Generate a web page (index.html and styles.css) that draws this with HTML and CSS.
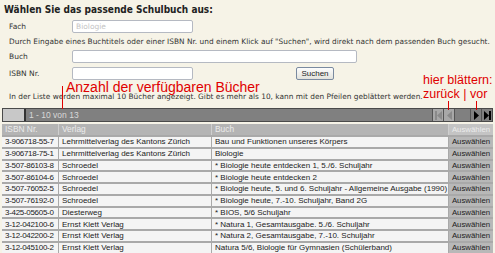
FILE: index.html
```html
<!DOCTYPE html>
<html lang="de">
<head>
    <meta charset="UTF-8">
    <title>Schulbuch wählen</title>
    <link rel="stylesheet" href="styles.css">
</head>
<body>
    <div class="page">
        <h1>Wählen Sie das passende Schulbuch aus:</h1>

        <form class="search-form">
            <div class="form-row">
                <label for="fach">Fach</label>
                <input type="text" id="fach" class="field field-short" placeholder="Biologie">
            </div>
            <p class="hint">Durch Eingabe eines Buchtitels oder einer ISBN Nr. und einem Klick auf "Suchen", wird direkt nach dem passenden Buch gesucht.</p>
            <div class="form-row">
                <label for="buch">Buch</label>
                <input type="text" id="buch" class="field field-long">
            </div>
            <div class="form-row">
                <label for="isbn">ISBN Nr.</label>
                <input type="text" id="isbn" class="field field-short">
                <button type="button" class="btn-search">Suchen</button>
            </div>
        </form>

        <p class="hint hint-list">In der Liste werden maximal 10 Bücher angezeigt. Gibt es mehr als 10, kann mit den Pfeilen geblättert werden.</p>

        <!-- annotations drawn over the page -->
        <div class="note note-count">Anzahl der verfügbaren Bücher</div>
        <div class="note-line line-count"></div>
        <div class="note note-pager">hier blättern:<br>zurück | vor</div>
        <div class="note-line line-back"></div>
        <div class="note-line line-next"></div>

        <div class="pager">
            <span class="pager-box"></span>
            <span class="pager-text">1 - 10 von 13</span>
            <div class="pager-nav">
                <span class="nav-btn disabled">
                    <svg width="7" height="9" viewBox="0 0 7 9"><rect x="0" y="0" width="2" height="9"/><polygon points="7,0 2,4.5 7,9"/></svg>
                </span>
                <span class="nav-btn disabled">
                    <svg width="5" height="9" viewBox="0 0 5 9"><polygon points="5,0 0,4.5 5,9"/></svg>
                </span>
                <span class="nav-gap"></span>
                <span class="nav-btn">
                    <svg width="5" height="9" viewBox="0 0 5 9"><polygon points="0,0 5,4.5 0,9"/></svg>
                </span>
                <span class="nav-btn">
                    <svg width="7" height="9" viewBox="0 0 7 9"><polygon points="0,0 5,4.5 0,9"/><rect x="5" y="0" width="2" height="9"/></svg>
                </span>
            </div>
        </div>

        <table class="books">
            <thead>
                <tr>
                    <th class="col-isbn">ISBN Nr.</th>
                    <th class="col-verlag">Verlag</th>
                    <th class="col-buch">Buch</th>
                    <th class="col-pick">Auswählen</th>
                </tr>
            </thead>
            <tbody id="bookRows"></tbody>
        </table>
    </div>

    <script>
        const books = [
            ['3-906718-55-7', 'Lehrmittelverlag des Kantons Zürich', 'Bau und Funktionen unseres Körpers'],
            ['3-906718-75-1', 'Lehrmittelverlag des Kantons Zürich', 'Biologie'],
            ['3-507-86103-8', 'Schroedel', '* Biologie heute entdecken 1, 5./6. Schuljahr'],
            ['3-507-86104-6', 'Schroedel', '* Biologie heute entdecken 2'],
            ['3-507-76052-5', 'Schroedel', '* Biologie heute, 5. und 6. Schuljahr - Allgemeine Ausgabe (1990)'],
            ['3-507-76192-0', 'Schroedel', '* Biologie heute, 7.-10. Schuljahr, Band 2G'],
            ['3-425-05605-0', 'Diesterweg', '* BIOS, 5/6 Schuljahr'],
            ['3-12-042100-6', 'Ernst Klett Verlag', '* Natura 1, Gesamtausgabe. 5./6. Schuljahr'],
            ['3-12-042200-2', 'Ernst Klett Verlag', '* Natura 2, Gesamtausgabe, 7.-10. Schuljahr'],
            ['3-12-045100-2', 'Ernst Klett Verlag', 'Natura 5/6, Biologie für Gymnasien (Schülerband)']
        ];

        const tbody = document.getElementById('bookRows');
        books.forEach(book => {
            const row = document.createElement('tr');
            row.innerHTML = `
                <td class="isbn">${book[0]}</td>
                <td>${book[1]}</td>
                <td>${book[2]}</td>
                <td class="pick">Auswählen</td>
            `;
            tbody.appendChild(row);
        });
    </script>
</body>
</html>
```

FILE: styles.css
```css
body {
    margin: 0;
    background: #f6f3e7;
    font-family: 'DejaVu Sans', Verdana, sans-serif;
    color: #333;
}

.page {
    position: relative;
    padding: 4px 2px 0 2px;
}

h1 {
    margin: 0 0 0 2px;
    font-family: 'DejaVu Sans Condensed', 'DejaVu Sans', sans-serif;
    font-size: 10px;
    font-weight: bold;
    line-height: 12px;
    color: #222;
}

.search-form {
    margin: 4px 0 0 7px;
}

.form-row {
    display: flex;
    align-items: center;
    height: 13px;
    margin-bottom: 4px;
}

label {
    width: 63px;
    font-size: 7.5px;
}

.field {
    box-sizing: border-box;
    height: 13px;
    padding: 0 3px;
    border: 1px solid #b5b9c2;
    border-radius: 2px;
    background: white;
    font-family: 'DejaVu Sans', sans-serif;
    font-size: 7.5px;
}

.field::placeholder {
    color: #c4c4c4;
}

.field-short { width: 121px; }
.field-long { width: 285px; }

.btn-search {
    margin-left: 103px;
    height: 13px;
    width: 38px;
    padding: 0;
    border: 1px solid #7a8aa0;
    border-radius: 2px;
    background: linear-gradient(#fdfdfd, #e2e2dc);
    font-family: 'Liberation Sans', Arial, sans-serif;
    font-size: 8px;
    color: #222;
}

.hint {
    margin: 0 0 3px 0;
    font-size: 7.4px;
    line-height: 10px;
    white-space: nowrap;
}

.hint-list {
    margin: 12px 0 0 7px;
}

.note {
    position: absolute;
    color: #e00000;
    font-family: 'Liberation Sans', Arial, sans-serif;
    font-size: 14px;
    line-height: 14px;
    white-space: nowrap;
}

.note-count {
    left: 66px;
    top: 80px;
}

.note-pager {
    left: 423px;
    top: 73px;
    font-size: 12.5px;
}

.note-line {
    position: absolute;
    width: 1px;
    background: #e00000;
}

.line-count { left: 62px; top: 86px; height: 23px; }
.line-back { left: 448px; top: 101px; height: 9px; }
.line-next { left: 476px; top: 101px; height: 9px; }

.pager {
    display: flex;
    align-items: center;
    box-sizing: border-box;
    height: 14px;
    margin-top: 6px;
    border: 1px solid #4a4a4a;
    background: #808080;
}

.pager-box {
    width: 21px;
    height: 12px;
    background: #c8c8c8;
    border-right: 2px solid #333;
}

.pager-text {
    margin-left: 3px;
    font-family: 'Liberation Sans', Arial, sans-serif;
    font-size: 8.5px;
    color: #d8d8d8;
}

.pager-nav {
    display: flex;
    margin-left: auto;
    height: 12px;
}

.nav-btn {
    display: flex;
    align-items: center;
    justify-content: center;
    width: 10px;
    height: 12px;
    border-left: 1px solid #555;
    fill: #000;
}

.nav-btn.disabled {
    background: #a8a8a8;
    fill: #8a8a8a;
}

.nav-gap {
    width: 15px;
    border-left: 1px solid #555;
}

.books {
    width: 100%;
    margin-top: 2px;
    border-collapse: separate;
    border-spacing: 0;
    table-layout: fixed;
    font-family: 'Liberation Sans', Arial, sans-serif;
    font-size: 8px;
    color: #222;
}

.books th {
    height: 11px;
    padding: 0 3px;
    background: #b4b4b4;
    border-right: 1px solid #cfcfcf;
    color: #ececec;
    font-weight: normal;
    font-size: 8.4px;
    text-align: left;
    line-height: 9px;
}

.books td {
    height: 9.75px;
    padding: 0 3px;
    background: #f4f4f4;
    border-top: 2px solid #a9a9a9;
    border-right: 1px solid #a9a9a9;
    line-height: 9px;
    white-space: nowrap;
    overflow: hidden;
}

.books td.isbn {
    letter-spacing: -0.3px;
}

.col-isbn { width: 50px; }
.col-verlag { width: 146px; }
.col-buch { width: 230px; }

.books th.col-pick,
.books td.pick {
    padding: 0;
    font-size: 7.8px;
    text-align: center;
    border-right: none;
}

.books th.col-pick {
    background: #c4c4c4;
}

.books td.pick {
    background: #b8b8b8;
}
```
